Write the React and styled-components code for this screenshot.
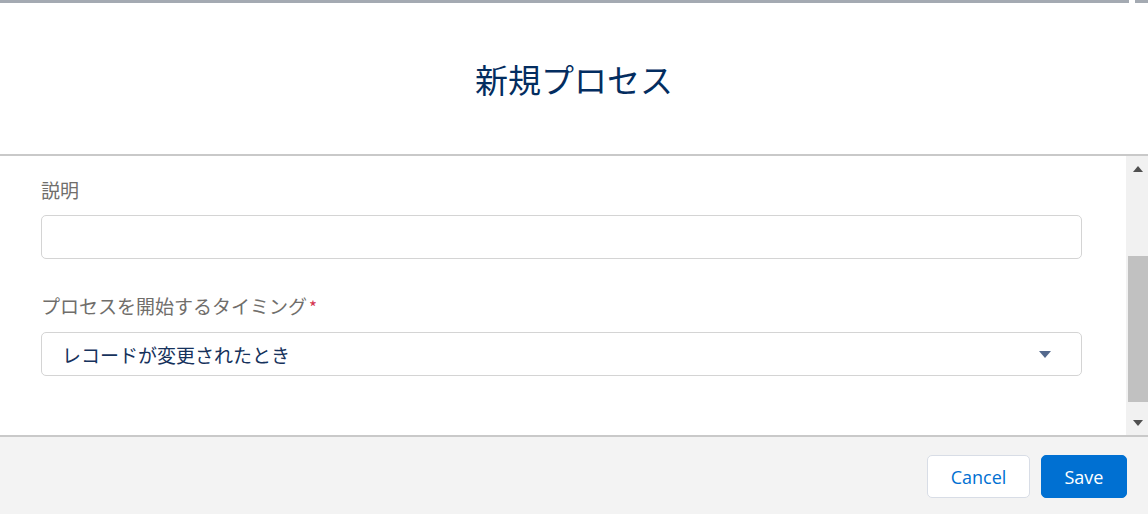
import React from 'react';
import styled, { createGlobalStyle } from 'styled-components';

const GlobalStyle = createGlobalStyle`
  html, body {
    margin: 0;
    padding: 0;
    background: #ffffff;
  }
  body {
    font-family: "Noto Sans CJK JP", "Open Sans", sans-serif;
  }
`;

const Modal = styled.div`
  width: 1148px;
  height: 514px;
  display: flex;
  flex-direction: column;
  overflow: hidden;
`;

const TopStrip = styled.div`
  display: flex;
  gap: 6px;
  height: 3px;
  flex-shrink: 0;
`;
const StripPart = styled.div`
  background: #a4aab2;
  flex: ${(p) => (p.$grow ? 1 : '0 0 13px')};
`;

const Header = styled.header`
  height: 153px;
  display: flex;
  align-items: center;
  justify-content: center;
  border-bottom: 2px solid #c9c9c9;
  flex-shrink: 0;
  padding-top: 1px;
  box-sizing: border-box;
`;

const Title = styled.h2`
  margin: 0;
  font-family: "Noto Sans CJK JP", sans-serif;
  font-weight: 400;
  font-size: 33px;
  line-height: 40px;
  color: #032d60;
`;

const Body = styled.div`
  display: flex;
  height: 279px;
  flex-shrink: 0;
`;

const Content = styled.div`
  flex: 1;
  padding: 21px 44px 0 41px;
`;

const Field = styled.div`
  display: flex;
  flex-direction: column;
  margin-bottom: ${(p) => p.$gap || 0}px;
`;

const Label = styled.label`
  font-family: "Noto Sans CJK JP", sans-serif;
  font-size: 19px;
  line-height: 26px;
  color: #706e6b;
  margin-bottom: ${(p) => p.$gap || 12}px;
`;

const Required = styled.span`
  color: #d4344f;
  margin-left: 2px;
  font-size: 17px;
`;

const Input = styled.div`
  height: 44px;
  box-sizing: border-box;
  border: 1px solid #d4d4d4;
  border-radius: 5px;
  background: #fff;
`;

const Select = styled(Input)`
  display: flex;
  align-items: center;
  justify-content: space-between;
  padding: 0 30px 0 20px;
  font-family: "Noto Sans CJK JP", sans-serif;
  font-size: 19px;
  color: #16325c;
`;

const Scrollbar = styled.div`
  width: 22px;
  background: #f1f1f1;
  display: flex;
  flex-direction: column;
  align-items: flex-end;
`;

const ArrowButton = styled.div`
  width: 22px;
  height: ${(p) => p.$h}px;
  display: flex;
  justify-content: center;
  align-items: ${(p) => (p.$down ? 'flex-end' : 'flex-start')};
  box-sizing: border-box;
  padding: ${(p) => (p.$down ? '0 0 9px 2px' : '10px 0 0 2px')};
`;

const Track = styled.div`
  flex: 1;
  width: 20px;
  display: flex;
  flex-direction: column;
  padding-top: 76px;
  padding-bottom: 9px;
  box-sizing: border-box;
`;

const Thumb = styled.div`
  flex: 1;
  background: #c1c1c1;
`;

const Footer = styled.footer`
  flex: 1;
  background: #f3f3f3;
  border-top: 2px solid #c9c9c9;
  display: flex;
  align-items: center;
  justify-content: flex-end;
  gap: 11px;
  padding: 0 21px 0 0;
`;

const Button = styled.button`
  height: 43px;
  box-sizing: border-box;
  border-radius: 5px;
  font-family: "Open Sans", sans-serif;
  font-size: 18px;
  padding: 0;
  width: ${(p) => p.$w}px;
  border: 1px solid ${(p) => (p.$brand ? '#0070d2' : '#d8dde6')};
  background: ${(p) => (p.$brand ? '#0070d2' : '#ffffff')};
  color: ${(p) => (p.$brand ? '#ffffff' : '#0070d2')};
  margin-top: 2px;
`;

const Triangle = ({ down, color, w, h }) => (
  <svg width={w} height={h} viewBox="0 0 12 7" preserveAspectRatio="none">
    <path d={down ? 'M0 0 L12 0 L6 7 Z' : 'M0 7 L12 7 L6 0 Z'} fill={color} />
  </svg>
);

export default function App() {
  return (
    <>
      <GlobalStyle />
      <Modal>
        <TopStrip>
          <StripPart $grow />
          <StripPart />
        </TopStrip>
        <Header>
          <Title>新規プロセス</Title>
        </Header>
        <Body>
          <Content>
            <Field $gap={34}>
              <Label>説明</Label>
              <Input />
            </Field>
            <Field>
              <Label>
                プロセスを開始するタイミング<Required>*</Required>
              </Label>
              <Select>
                <span>レコードが変更されたとき</span>
                <Triangle down color="#54698d" w={12} h={7} />
              </Select>
            </Field>
          </Content>
          <Scrollbar>
            <ArrowButton $h={24}>
              <Triangle color="#505050" w={10} h={6} />
            </ArrowButton>
            <Track>
              <Thumb />
            </Track>
            <ArrowButton $h={24} $down>
              <Triangle down color="#505050" w={10} h={6} />
            </ArrowButton>
          </Scrollbar>
        </Body>
        <Footer>
          <Button $w={103}>Cancel</Button>
          <Button $w={86} $brand>Save</Button>
        </Footer>
      </Modal>
    </>
  );
}
